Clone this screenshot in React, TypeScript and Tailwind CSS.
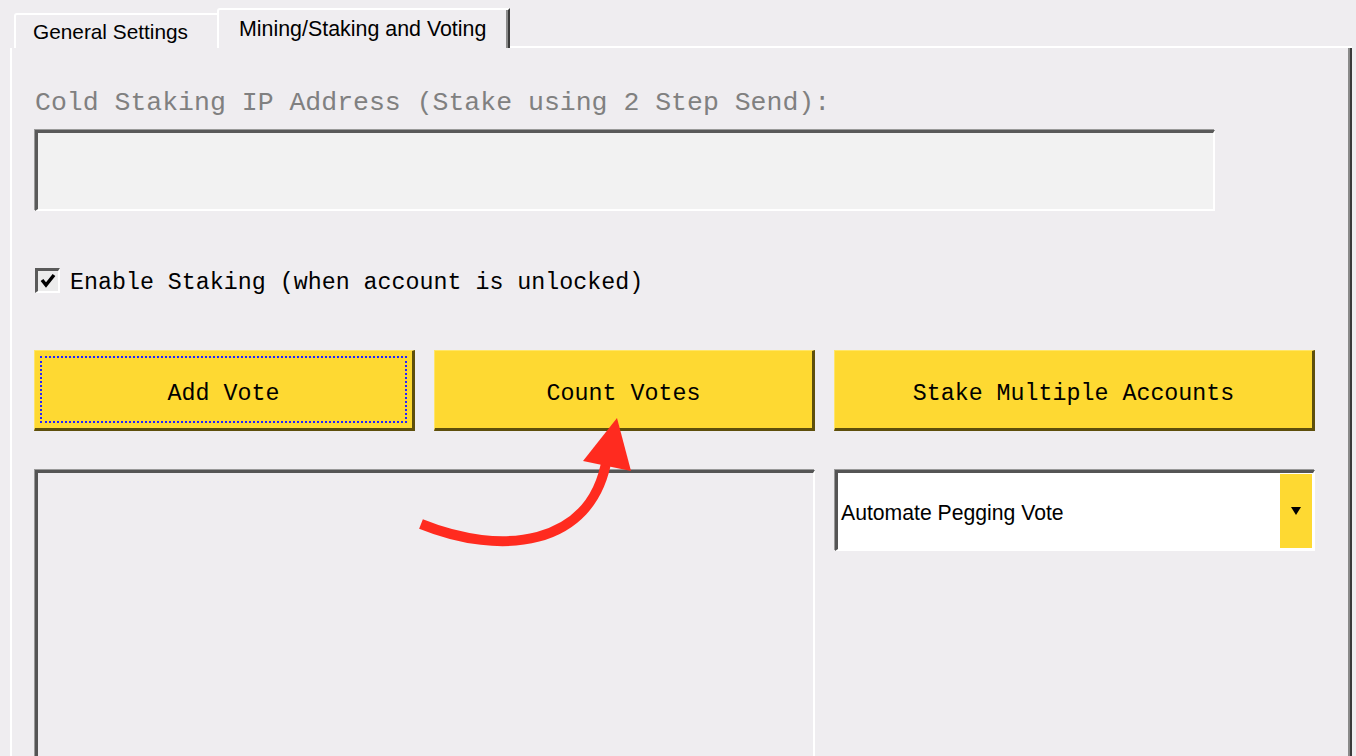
const mono = { fontFamily: '"Liberation Mono", "Courier New", monospace' };

const YellowButton = ({ label, width, focused }: { label: string; width: string; focused?: boolean }) => (
  <div
    className={`${width} h-[81px] shrink-0 bg-[#fed932] border-t border-l border-[#ffe567] border-r-[3px] border-b-[3px] border-r-[#5e4f0c] border-b-[#5e4f0c] p-[5px]`}
  >
    <div
      className={`w-full h-full flex items-center justify-center pt-[9px] text-[23.3px] text-black ${
        focused ? "border-2 border-dotted border-[#2424ff]" : "border-2 border-transparent"
      }`}
    >
      <span className="font-['Liberation_Mono',monospace]">{label}</span>
    </div>
  </div>
);

const App = () => {
  return (
    <div className="relative w-[1356px] h-[756px] overflow-hidden bg-[#efedf0] font-['Liberation_Sans',Arial,sans-serif]">
      {/* tab strip */}
      <div className="flex items-end h-[48px] pl-[14px] pr-[4px]">
        <div className="w-[203px] h-[35px] border-t-2 border-l-2 border-white rounded-tl-[3px] flex items-center pl-[17px] pt-[1px] text-[20.8px] text-black">
          General Settings
        </div>
        <div className="w-[293px] h-[40px] border-t-2 border-l-2 border-white border-r-2 border-r-[#3a3a3a] rounded-tl-[3px] shadow-[inset_-2px_0_0_#8a8a8a] flex items-center pl-[20px] pt-[1px] text-[21.4px] text-black">
          Mining/Staking and Voting
        </div>
        <div className="flex-1 h-[2px] bg-white" />
      </div>

      {/* panel */}
      <div className="ml-[10px] mr-[4px] h-[708px] border-l-2 border-white border-r-2 border-r-[#3a3a3a] shadow-[inset_-2px_0_0_#8a8a8a] pl-[23px] pt-[37px]">
        <div className="h-[30px] leading-[30px] pt-[3px] text-[26.5px] text-[#808080]" style={mono}>
          Cold Staking IP Address (Stake using 2 Step Send):
        </div>

        <div className="mt-[15px] w-[1180px] h-[81px] bg-[#f2f2f2] border-t-[3px] border-l-[3px] border-t-[#5a5a5a] border-l-[#5a5a5a] border-b-2 border-r-2 border-white shadow-[-1px_-1px_0_#9a9a9a]" />

        <div className="mt-[57px] h-[25px] flex items-center gap-[10px]">
          <div className="w-[25px] h-[25px] bg-[#ececec] border-t-[3px] border-l-[3px] border-t-[#5a5a5a] border-l-[#5a5a5a] border-b-2 border-r-2 border-white flex items-center justify-center">
            <svg width="16" height="16" viewBox="0 0 16 16">
              <path d="M2 7 L6 12 L14 2" fill="none" stroke="#000" strokeWidth="3.5" />
            </svg>
          </div>
          <span className="pt-[6px] text-[23.3px] text-black" style={mono}>
            Enable Staking (when account is unlocked)
          </span>
        </div>

        <div className="mt-[57px] flex gap-[19px] -ml-px">
          <YellowButton label="Add Vote" width="w-[381px]" focused />
          <YellowButton label="Count Votes" width="w-[381px]" />
          <YellowButton label="Stake Multiple Accounts" width="w-[481px]" />
        </div>

        <div className="mt-[39px] flex gap-[20px]">
          <div className="w-[780px] h-[300px] border-t-[3px] border-l-[3px] border-t-[#555] border-l-[#555] border-r-2 border-white shadow-[-1px_-1px_0_#999]" />
          <div className="w-[480px] h-[81px] bg-white border-t-[3px] border-l-[3px] border-t-[#555] border-l-[#555] border-b-2 border-r-2 border-white shadow-[-1px_-1px_0_#999] flex items-stretch">
            <div className="flex-1 flex items-center pl-[3px] pt-[3px] text-[21.2px] text-black">
              Automate Pegging Vote
            </div>
            <div className="w-[32px] my-[1px] mr-[1px] bg-[#fed932] flex items-center justify-center">
              <svg width="10" height="8" viewBox="0 0 10 8">
                <path d="M0 0 H10 L5 8 Z" fill="#000" />
              </svg>
            </div>
          </div>
        </div>
      </div>

      {/* red annotation arrow */}
      <svg className="absolute inset-0 pointer-events-none" width="1356" height="756" viewBox="0 0 1356 756">
        <path d="M421 524 C 500 556, 592 548, 607 458" fill="none" stroke="#ff2b1f" strokeWidth="10" />
        <polygon points="617,418 583,461 631,471" fill="#ff2b1f" />
      </svg>
    </div>
  );
};

export default App;
